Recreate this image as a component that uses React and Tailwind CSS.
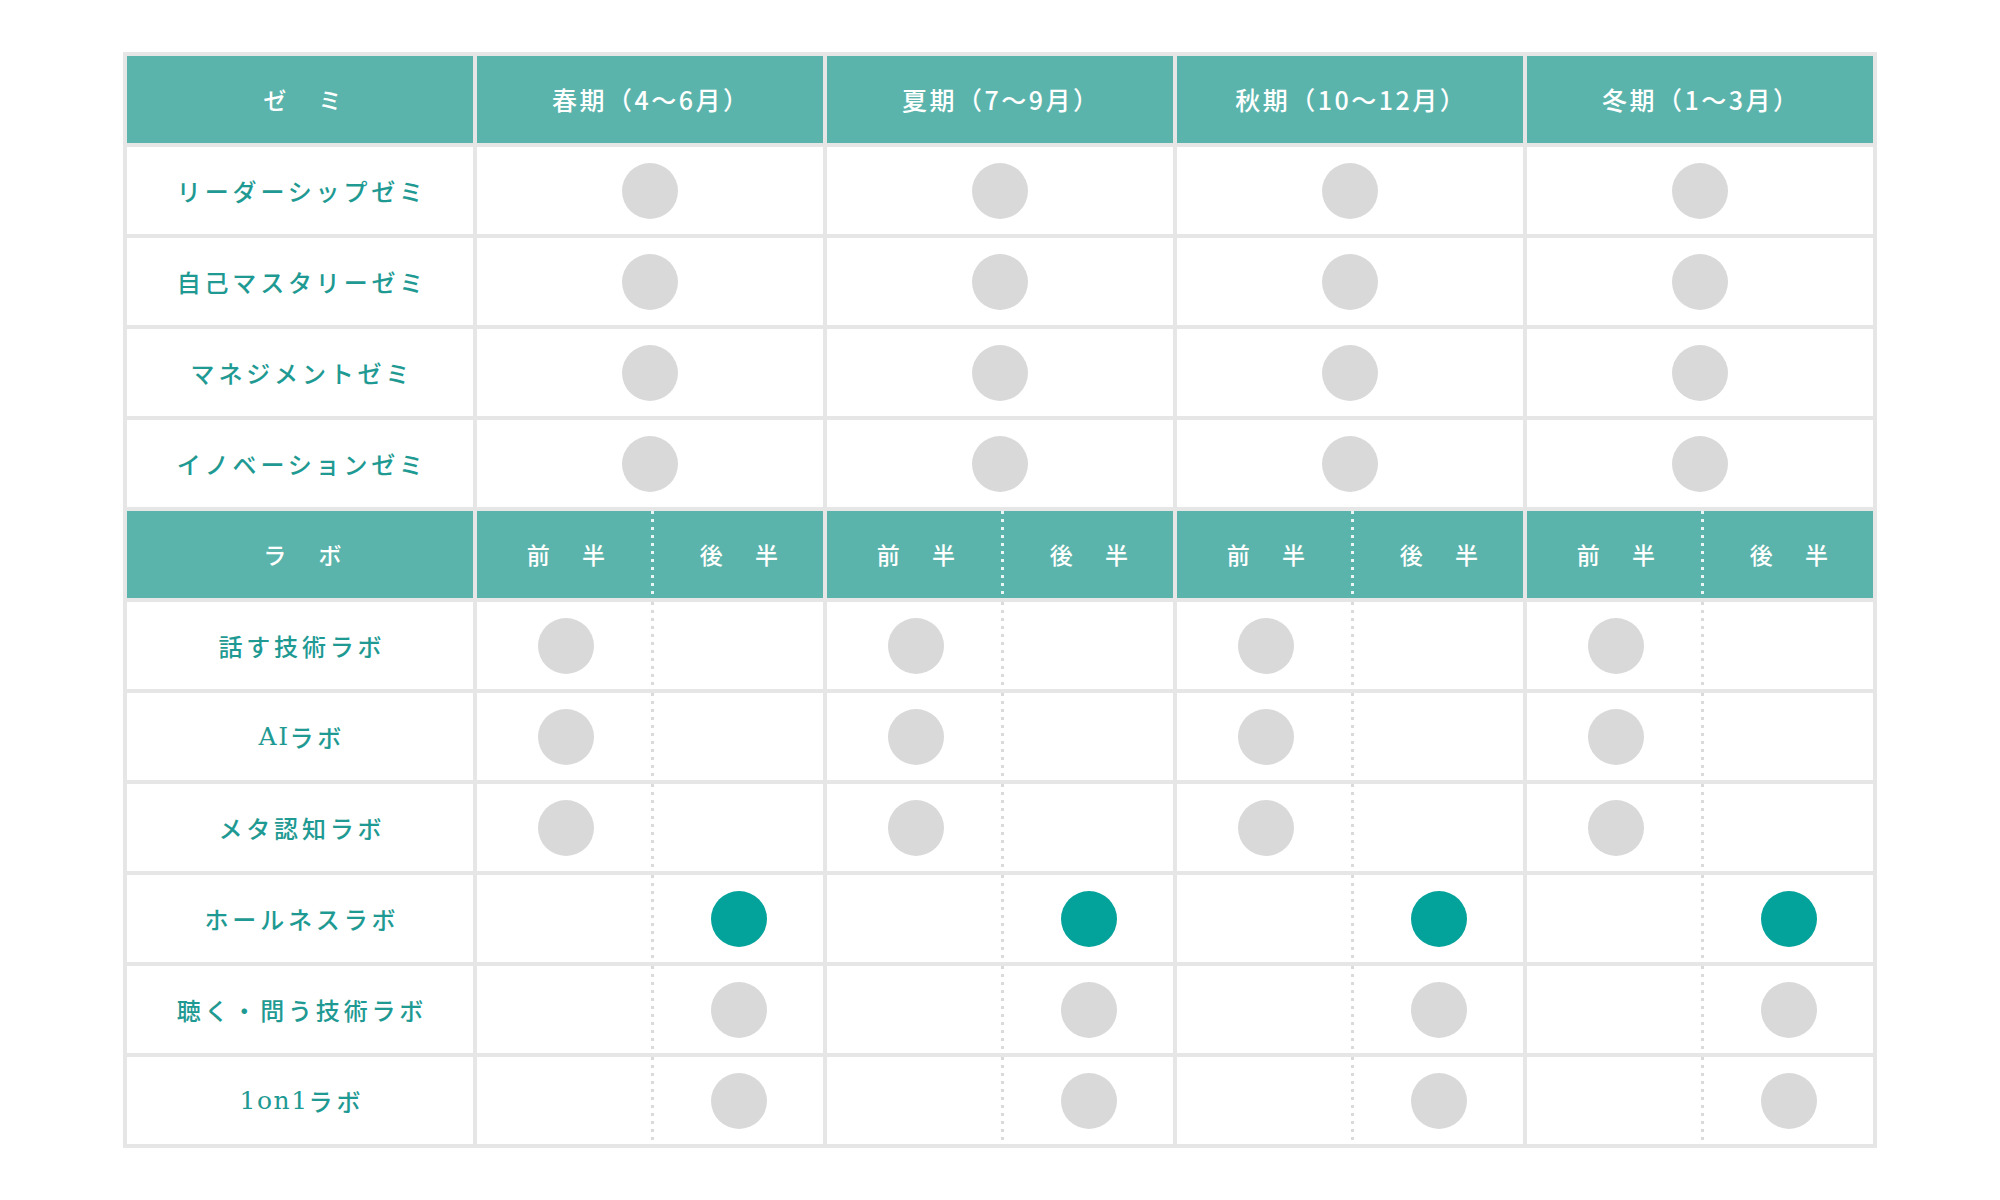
import React from 'react';

const periods = ['春期（4〜6月）', '夏期（7〜9月）', '秋期（10〜12月）', '冬期（1〜3月）'];

const zemi = ['リーダーシップゼミ', '自己マスタリーゼミ', 'マネジメントゼミ', 'イノベーションゼミ'];

// half: 0 = 前半, 1 = 後半
const labs = [
    { name: '話す技術ラボ', half: 0 },
    { name: 'AIラボ', half: 0, latin: 'AI' },
    { name: 'メタ認知ラボ', half: 0 },
    { name: 'ホールネスラボ', half: 1, active: true },
    { name: '聴く・問う技術ラボ', half: 1 },
    { name: '1on1ラボ', half: 1, latin: '1on1' },
];

const Dot = ({ active }) => (
    <span className={`block w-[56px] h-[56px] rounded-full ${active ? 'bg-[#03a29a]' : 'bg-[#d9d9d9]'}`} />
);

const Label = ({ lab }) => {
    if (!lab.latin) return lab.name;
    return (
        <>
            <span className="font-['DejaVu_Serif',serif] font-normal text-[25px] tracking-[0.06em]">{lab.latin}</span>
            {lab.name.slice(lab.latin.length)}
        </>
    );
};

const headCell = 'bg-[#5ab4ab] text-white font-medium flex items-center justify-center';
const bodyCell = 'bg-white flex items-center justify-center';
const labelCell = 'bg-white flex items-center justify-center text-[#1f9a93] text-[24px] font-medium tracking-[0.16em] pl-[0.16em]';

const Split = ({ dark, children }) => (
    <div className="relative grid grid-cols-2 h-full">
        {children}
        <span
            className={`absolute left-1/2 top-0 bottom-0 w-[3px] ml-[1px] ${
                dark
                    ? 'bg-[repeating-linear-gradient(to_bottom,#e9f6f5_0_3px,transparent_3px_8px)]'
                    : 'bg-[repeating-linear-gradient(to_bottom,#dadada_0_3px,transparent_3px_8px)]'
            }`}
        />
    </div>
);

export default function App() {
    return (
        <div className="min-h-screen bg-white pt-[52px] font-['Noto_Sans_CJK_JP',sans-serif]">
            <div className="mx-auto w-[1754px] bg-[#e6e6e6] p-[4px] grid gap-[4px]">
                {/* ゼミ header */}
                <div className="grid grid-cols-5 gap-[4px] h-[87px]">
                    <div className={`${headCell} text-[23px] tracking-[0.2em] pl-[0.4em]`}>ゼ　ミ</div>
                    {periods.map((p) => (
                        <div key={p} className={`${headCell} text-[25px] tracking-[0.1em] pl-[0.1em]`}>{p}</div>
                    ))}
                </div>

                {zemi.map((z) => (
                    <div key={z} className="grid grid-cols-5 gap-[4px] h-[87px]">
                        <div className={labelCell}>{z}</div>
                        {periods.map((p) => (
                            <div key={p} className={bodyCell}>
                                <Dot />
                            </div>
                        ))}
                    </div>
                ))}

                {/* ラボ header */}
                <div className="grid grid-cols-5 gap-[4px] h-[87px]">
                    <div className={`${headCell} text-[23px] tracking-[0.2em] pl-[0.4em]`}>ラ　ボ</div>
                    {periods.map((p) => (
                        <div key={p} className="bg-[#5ab4ab]">
                            <Split dark>
                                <div className={`${headCell} text-[23px] tracking-[0.2em] pl-[0.4em]`}>前　半</div>
                                <div className={`${headCell} text-[23px] tracking-[0.2em] pl-[0.4em]`}>後　半</div>
                            </Split>
                        </div>
                    ))}
                </div>

                {labs.map((lab) => (
                    <div key={lab.name} className="grid grid-cols-5 gap-[4px] h-[87px]">
                        <div className={labelCell}>
                            <Label lab={lab} />
                        </div>
                        {periods.map((p) => (
                            <div key={p} className="bg-white">
                                <Split>
                                    <div className={`${bodyCell} pl-[4px]`}>{lab.half === 0 && <Dot active={lab.active} />}</div>
                                    <div className={`${bodyCell} pl-[4px]`}>{lab.half === 1 && <Dot active={lab.active} />}</div>
                                </Split>
                            </div>
                        ))}
                    </div>
                ))}
            </div>
        </div>
    );
}
